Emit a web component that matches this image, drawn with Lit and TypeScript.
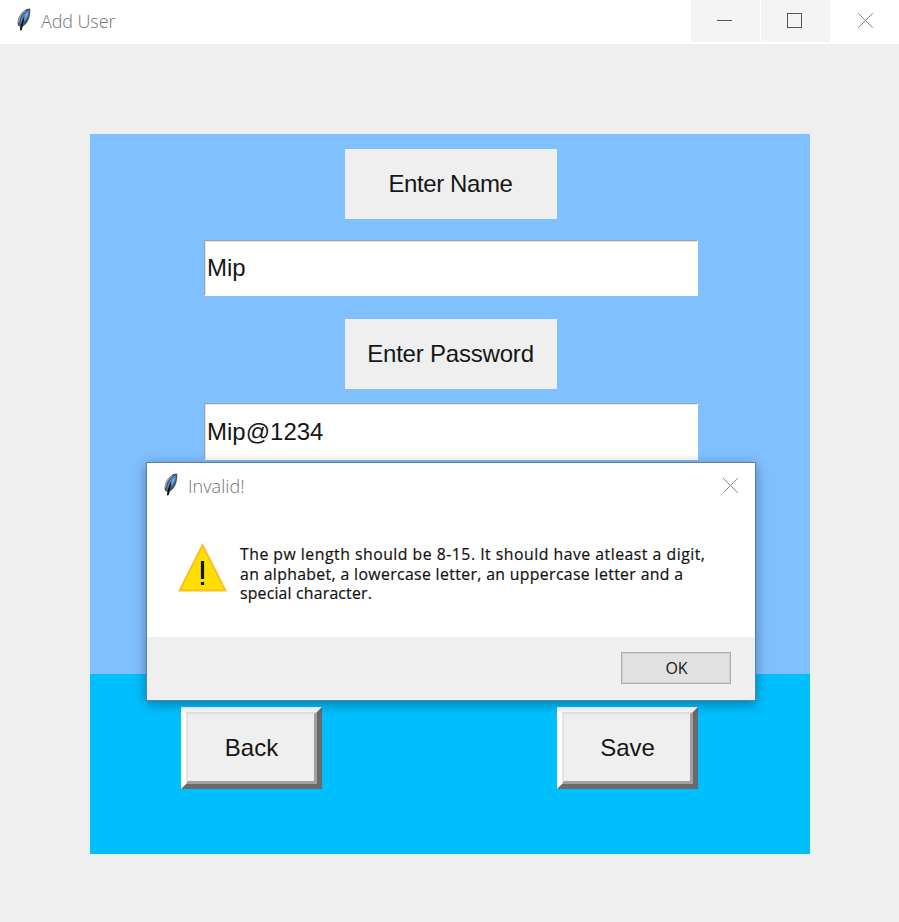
import { LitElement, html, css, svg } from "lit";
import { customElement, property } from "lit/decorators.js";

const closeIcon = html`<svg class="close" width="16" height="16" viewBox="0 0 16 16" fill="none" stroke="#858585" stroke-width="1">
  <path d="M.2 .2L14.8 14.8M14.8 .2L.2 14.8" />
</svg>`;

const feather = svg`
  <path d="M14 .4C10.4 .2 6.4 3 3.8 7.4C1.8 10.8 1.2 14.4 2 17.4L4.2 18.8L4.6 23.6L6 21L6.8 18.6C10 16.8 12.8 12.8 13.6 8.6C14.2 5.4 14.6 2.2 14 .4Z" fill="#48535d" />
  <path d="M12.8 2.2C10.8 2.8 8.2 5 6.2 8.6C4.8 11.4 4 14 4.2 16.8C8 15 11 11.4 12.2 7.6C12.8 5.4 13.2 3.4 12.8 2.2Z" fill="#4f8bd6" />
  <path d="M9.4 2.6C5.6 5.2 3 9.6 2.6 14.4" fill="none" stroke="#a9b5bd" stroke-width="1.1" />
  <path d="M8.6 8.8C7 12 5.6 15 4.8 22" fill="none" stroke="#0a0d12" stroke-width="1.6" />
  <path d="M11.6 5L8 11.6" fill="none" stroke="#83b2ea" stroke-width="1.1" />
`;

@customElement("tk-feather")
export class TkFeather extends LitElement {
  static styles = css`
    :host { display: block; width: 16px; height: 25px; }
    svg { display: block; }
  `;
  render() {
    return html`<svg width="16" height="25" viewBox="0 0 16 25">${feather}</svg>`;
  }
}

@customElement("tk-button")
export class TkButton extends LitElement {
  @property() label = "";
  static styles = css`
    :host {
      box-sizing: border-box;
      display: block;
      width: 141px;
      height: 82px;
      border: 5px solid;
      border-color: #fff #6a6a6a #6a6a6a #fff;
    }
    .face {
      box-sizing: border-box;
      height: 100%;
      border: 3px solid;
      border-color: #e4e4e4 #a0a0a0 #a0a0a0 #e4e4e4;
      border-width: 2px 3px 3px 2px;
      background: #efefef;
      display: flex;
      align-items: center;
      justify-content: center;
      padding-left: 1px;
    }
  `;
  render() {
    return html`<div class="face"><span>${this.label}</span></div>`;
  }
}

@customElement("app-root")
export class AppRoot extends LitElement {
  static styles = css`
    :host {
      display: block;
      position: relative;
      width: 899px;
      height: 922px;
      overflow: hidden;
      background: #efefef;
      color: #161616;
      font: 24px/28px "Liberation Sans", Arial, sans-serif;
    }
    .titlebar {
      display: flex;
      height: 44px;
      background: #fff;
      color: #747474;
      font: 300 18px/24px "Open Sans", "Noto Sans", sans-serif;
    }
    .titlebar tk-feather { margin: 8px 0 0 16px; }
    .title { margin: 9px auto 0 9px; letter-spacing: -0.1px; }
    .control {
      box-sizing: border-box;
      display: flex;
      justify-content: center;
      width: 69px;
      height: 42px;
      margin-right: 1px;
      padding: 13px 2px 0 0;
      background: #f4f4f4;
    }
    .control svg { display: block; }
    .control.plain { background: none; width: 68px; margin: 0; padding: 13px 0 0 1px; }
    .panel {
      display: flex;
      flex-direction: column;
      width: 720px;
      height: 720px;
      margin: 90px 0 0 90px;
    }
    .form {
      box-sizing: border-box;
      height: 540px;
      padding-top: 15px;
      background: #80c0ff;
      display: flex;
      flex-direction: column;
      align-items: center;
    }
    .label {
      display: flex;
      align-items: center;
      justify-content: center;
      width: 212px;
      height: 70px;
      background: #efefef;
      margin-left: 1px;
    }
    .name { letter-spacing: -0.4px; }
    .pass { letter-spacing: -0.2px; }
    .entry {
      box-sizing: border-box;
      display: flex;
      align-items: center;
      width: 494px;
      height: 56px;
      margin: 21px 0 23px 2px;
      padding-left: 2px;
      background: #fff;
      border: 1px solid;
      border-color: #a0a0a0 #fff #fff #a0a0a0;
      box-shadow: inset 1px 1px #e3e3e3;
    }
    .entry.second { height: 57px; margin-top: 14px; }
    .actions {
      box-sizing: border-box;
      height: 180px;
      padding: 33px 112px 0 91px;
      background: #00bfff;
      display: flex;
      justify-content: space-between;
    }
    .dialog {
      position: absolute;
      box-sizing: border-box;
      left: 146px;
      top: 462px;
      width: 610px;
      height: 239px;
      display: flex;
      flex-direction: column;
      border: 1px solid #5a7fa5;
      background: #fff;
      box-shadow: 0 3px 12px rgba(0, 0, 0, 0.36);
    }
    .heading {
      display: flex;
      height: 48px;
      color: #747474;
      font: 300 18px/24px "Open Sans", "Noto Sans", sans-serif;
    }
    .heading tk-feather { margin: 10px 0 0 16px; }
    .heading .title { margin: 11px auto 0 9px; letter-spacing: 0.05px; }
    .heading .close { margin: 15px 16px 0 0; }
    .message {
      flex: 1;
      display: flex;
      padding-left: 31px;
    }
    .warning { display: block; margin-top: 32px; flex: none; }
    .copy {
      margin: 34px 0 0 13px;
      color: #111;
      font: 15.8px/19.5px "Open Sans", "Noto Sans", sans-serif;
      -webkit-text-stroke: 0.2px #111;
      white-space: nowrap;
    }
    .line { display: block; letter-spacing: 0.5px; }
    .line.middle { letter-spacing: 0.36px; }
    .line.last { letter-spacing: 0.2px; }
    .footer {
      height: 63px;
      background: #efefef;
      display: flex;
      justify-content: flex-end;
    }
    .ok {
      box-sizing: border-box;
      width: 110px;
      height: 32px;
      margin: 15px 24px 0 0;
      border: 1px solid #adadad;
      box-shadow: inset 0 0 0 1px #d0d0d0;
      background: #e1e1e1;
      text-align: center;
      font: 16px/31px "Open Sans", "Noto Sans", sans-serif;
      padding-left: 1px;
    }
  `;

  render() {
    return html`
      <div class="titlebar">
        <tk-feather></tk-feather>
        <span class="title">Add User</span>
        <div class="control">
          <svg width="15" height="15"><path d="M0 7.5H15" stroke="#555" /></svg>
        </div>
        <div class="control">
          <svg width="15" height="15"><rect x=".5" y=".5" width="14" height="14" fill="none" stroke="#555" /></svg>
        </div>
        <div class="control plain">${closeIcon}</div>
      </div>
      <div class="panel">
        <div class="form">
          <div class="label name">Enter Name</div>
          <div class="entry">Mip</div>
          <div class="label pass">Enter Password</div>
          <div class="entry second">Mip@1234</div>
        </div>
        <div class="actions">
          <tk-button label="Back"></tk-button>
          <tk-button label="Save"></tk-button>
        </div>
      </div>
      <div class="dialog">
        <div class="heading">
          <tk-feather></tk-feather>
          <span class="title">Invalid!</span>
          ${closeIcon}
        </div>
        <div class="message">
          <svg class="warning" width="49" height="50" viewBox="0 0 49 50">
            <path d="M24.5 2L47.5 47.5H1.5Z" fill="#ffde00" stroke="#fdbd25" stroke-width="1.8" />
            <path d="M24.5 18V36M24.5 39V42" stroke="#111" stroke-width="3.2" />
          </svg>
          <div class="copy">
            <span class="line">The pw length should be 8-15. It should have atleast a digit,</span>
            <span class="line middle">an alphabet, a lowercase letter, an uppercase letter and a</span>
            <span class="line last">special character.</span>
          </div>
        </div>
        <div class="footer"><div class="ok">OK</div></div>
      </div>
    `;
  }
}
